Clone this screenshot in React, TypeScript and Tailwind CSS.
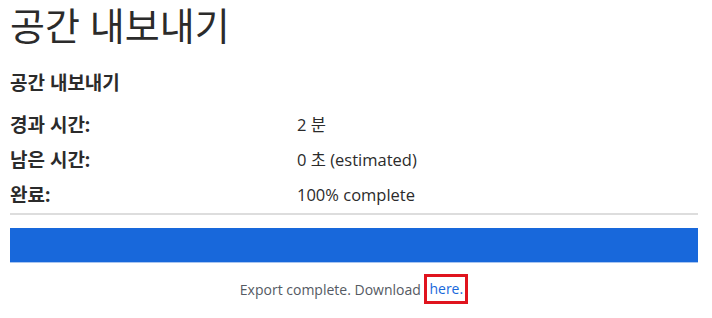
export default function App() {
  const rows = [
    { label: "경과 시간:", value: "2 분" },
    { label: "남은 시간:", value: "0 초 (estimated)" },
    { label: "완료:", value: "100% complete" },
  ];

  return (
    <div
      className="w-[712px] h-[318px] bg-white text-[#2b2b2b] overflow-hidden"
      style={{ fontFamily: '"Open Sans", "Noto Sans CJK KR", sans-serif' }}
    >
      <div className="ml-[10px] w-[688px]">
        <h1 className="text-[38px] leading-[48px] pt-[1px] font-normal">
          공간 내보내기
        </h1>
        <h2 className="mt-[22px] text-[19px] leading-[24px] font-bold">
          공간 내보내기
        </h2>

        <div className="mt-[13px] flex flex-col">
          {rows.map((row) => (
            <div key={row.label} className="flex h-[35px] items-center">
              <div className="w-[287px] text-[19px] font-bold">{row.label}</div>
              <div className="text-[16.5px]">{row.value}</div>
            </div>
          ))}
        </div>

        <div className="h-[2px] bg-[#dddddd]" />

        <div className="mt-[13px] h-[35px] bg-[#1868db] border-b border-[#a9c5f0]" />

        <div className="mt-[11px] flex justify-center items-center text-[14px] text-[#555a63]">
          <span>Export complete. Download&nbsp;</span>
          <a
            href="#"
            className="border-[3px] border-[#e0141e] px-[2px] leading-[24px] text-[#1868db] whitespace-nowrap"
          >
            here.
          </a>
        </div>
      </div>
    </div>
  );
}
